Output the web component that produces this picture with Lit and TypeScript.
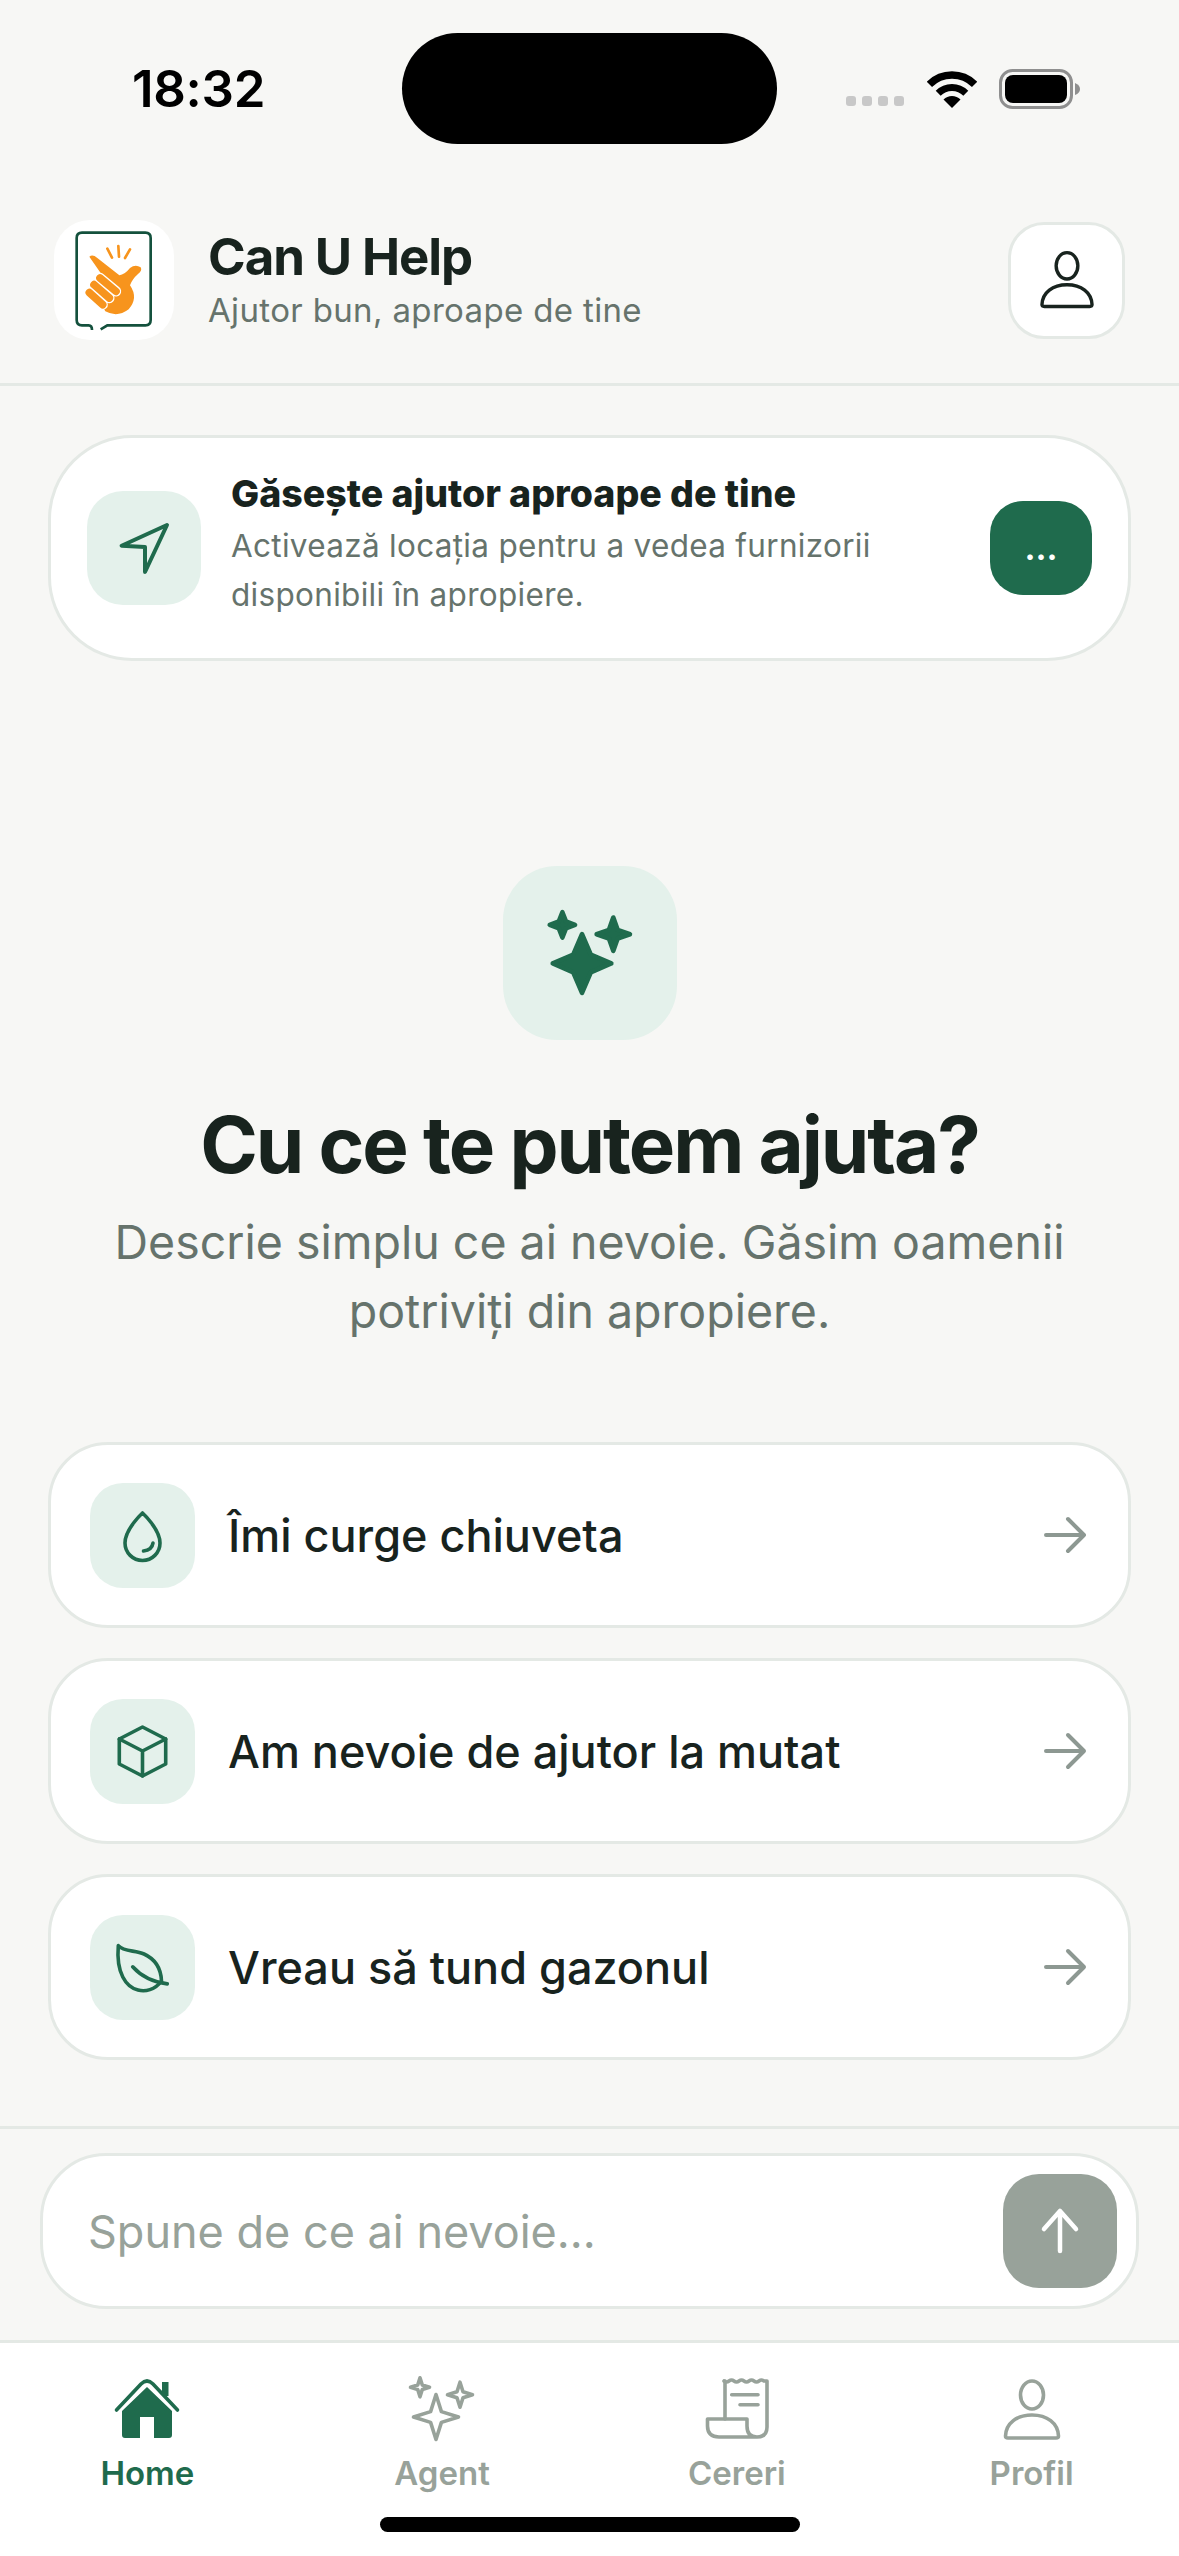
import { LitElement, html, css, svg } from "lit";
import { customElement } from "lit/decorators.js";

function star(cx: number, cy: number, r: number, k = 0.26) {
  const i = r * k;
  return `M${cx} ${cy - r}L${cx + i} ${cy - i}L${cx + r} ${cy}L${cx + i} ${cy + i}L${cx} ${cy + r}L${cx - i} ${cy + i}L${cx - r} ${cy}L${cx - i} ${cy - i}Z`;
}

const personIcon = svg`
  <ellipse cx="36" cy="21" rx="11.5" ry="14" fill="none" stroke="currentColor" stroke-width="3.6"/>
  <path d="M9.5 62C10 49 21 41 36 41C51 41 62 49 62.5 62Q62.5 64 60 64H12Q9.5 64 9.5 62Z" fill="none" stroke="currentColor" stroke-width="3.6" stroke-linejoin="round"/>`;

@customElement("app-root")
export class AppRoot extends LitElement {
  static styles = css`
    :host {
      display: flex;
      flex-direction: column;
      position: relative;
      width: 1179px;
      height: 2556px;
      background: #f7f7f5;
      font-family: Inter, "Liberation Sans", sans-serif;
      color: #18231e;
      overflow: hidden;
    }
    svg { display: block; }
    .status {
      height: 177px;
      flex: none;
      display: grid;
      grid-template-columns: 402px 375px 1fr;
      padding-top: 33px;
      box-sizing: border-box;
    }
    .time {
      height: 111px;
      display: flex;
      align-items: center;
      padding-left: 132px;
      font-size: 51px;
      font-weight: 600;
      color: #000;
      letter-spacing: -0.3px;
    }
    .island { width: 375px; height: 111px; border-radius: 56px; background: #000; }
    .sys { height: 111px; display: flex; align-items: center; padding-left: 69px; }
    .dots { display: flex; gap: 6px; align-self: flex-end; margin-bottom: 38px; }
    .dots i { width: 10px; height: 10px; border-radius: 3px; background: #c8c8c8; }
    .wifi { margin-left: 23px; }
    .battery { margin-left: 22px; }

    .header {
      flex: none;
      display: flex;
      align-items: center;
      height: 209px;
      box-sizing: border-box;
      padding: 0 54px 0 54px;
      border-bottom: 3px solid #e4e9e5;
    }
    .logo { width: 120px; height: 120px; border-radius: 36px; background: #fff; flex: none; overflow: hidden; }
    .brand { margin-left: 34px; flex: 1; margin-top: -5px; }
    .brand h2 { margin: 0; font-size: 51px; line-height: 62px; font-weight: 700; letter-spacing: -1.1px; }
    .brand p { margin: 2px 0 0; font-size: 33px; line-height: 40px; color: #66736c; letter-spacing: 0.35px; }
    .avatar {
      width: 117px; height: 117px; box-sizing: border-box; border-radius: 36px;
      background: #fff; border: 3px solid #e4e9e5;
      display: flex; align-items: center; justify-content: center; color: #18231e;
    }

    .loc {
      flex: none;
      margin: 49px 48px 0;
      height: 226px;
      box-sizing: border-box;
      background: #fff;
      border: 3px solid #e4e9e5;
      border-radius: 84px;
      display: flex;
      align-items: center;
      padding: 0 36px;
    }
    .loc-ico { width: 114px; height: 114px; border-radius: 36px; background: #e4f1eb; flex: none; }
    .loc-text { margin-left: 30px; flex: 1; margin-top: -7px; }
    .loc-text h3 { margin: 0; font-size: 37.5px; line-height: 48px; font-weight: 800; white-space: nowrap; }
    .loc-text p { margin: 3px 0 0; font-size: 31.5px; line-height: 49px; color: #66736c; letter-spacing: 0.3px; }
    .more {
      width: 102px; height: 94px; border-radius: 33px; background: #1f6b4d; color: #fff; flex: none;
      display: flex; align-items: center; justify-content: center; font-size: 33px; font-weight: 700; line-height: 1;
    }

    .hero { flex: none; margin-top: 205px; display: flex; flex-direction: column; align-items: center; }
    .spark { width: 174px; height: 174px; border-radius: 54px; background: #e4f1eb; }
    .hero h1 { margin: 57px 0 0; font-size: 78px; line-height: 96px; font-weight: 700; letter-spacing: -2.1px; }
    .hero p { margin: 15px 0 0; width: 1000px; text-align: center; font-size: 46.5px; line-height: 69px; color: #66736c; }

    .rows { flex: none; margin: 96px 48px 0; display: flex; flex-direction: column; gap: 30px; }
    .row {
      height: 186px; box-sizing: border-box; background: #fff; border: 3px solid #e4e9e5; border-radius: 60px;
      display: flex; align-items: center; padding: 0 39px;
    }
    .row-ico { width: 105px; height: 105px; border-radius: 33px; background: #e4f1eb; flex: none; }
    .row span { margin-left: 33px; flex: 1; font-size: 45px; font-weight: 500; }

    .composer {
      flex: none;
      margin-top: 66px;
      height: 214px;
      box-sizing: border-box;
      border-top: 3px solid #e4e9e5;
      padding: 24px 40px 0 40px;
    }
    .input {
      height: 156px; box-sizing: border-box; background: #fff; border: 3px solid #e4e9e5; border-radius: 66px;
      display: flex; align-items: center; padding: 0 19px 0 45px;
    }
    .input span { flex: 1; font-size: 45px; color: #98a29a; }
    .send { width: 114px; height: 114px; border-radius: 36px; background: #98a29a; display: flex; align-items: center; justify-content: center; }

    .nav {
      flex: 1;
      background: #fff;
      border-top: 3px solid #e4e9e5;
      display: grid;
      grid-template-columns: repeat(4, 1fr);
      padding-top: 31px;
      box-sizing: border-box;
    }
    .tab { display: flex; flex-direction: column; align-items: center; color: #98a29a; }
    .tab.on { color: #1f6b4d; }
    .tab b { font-size: 33px; font-weight: 600; line-height: 40px; margin-top: 7px; }
    .home-bar { position: absolute; left: 380px; bottom: 24px; width: 420px; height: 15px; border-radius: 8px; background: #000; }
  `;

  private arrow() {
    return html`<svg width="48" height="48" viewBox="0 0 48 48" fill="none" stroke="#8d9892" stroke-width="4" stroke-linecap="round" stroke-linejoin="round"><path d="M5 24H43M27 8L43 24L27 40"/></svg>`;
  }

  private row(label: string, icon: unknown) {
    return html`<div class="row">
      <div class="row-ico"><svg width="105" height="105" viewBox="0 0 105 105" fill="none" stroke="#1f6b4d" stroke-width="3.6" stroke-linecap="round" stroke-linejoin="round">${icon}</svg></div>
      <span>${label}</span>
      ${this.arrow()}
    </div>`;
  }

  render() {
    return html`
      <div class="status">
        <div class="time">18:32</div>
        <div class="island"></div>
        <div class="sys">
          <div class="dots"><i></i><i></i><i></i><i></i></div>
          <svg class="wifi" width="50" height="38" viewBox="0 0 50 38">
            <path d="M2.4 14.4A32 32 0 0 1 47.6 14.4" fill="none" stroke="#000" stroke-width="7.5"/>
            <path d="M11.2 23.2A19.5 19.5 0 0 1 38.8 23.2" fill="none" stroke="#000" stroke-width="7"/>
            <path d="M25 38L16.5 29.5A12 12 0 0 1 33.5 29.5Z" fill="#000"/>
          </svg>
          <svg class="battery" width="82" height="40" viewBox="0 0 82 40">
            <rect x="1.5" y="1.5" width="71" height="37" rx="12" fill="none" stroke="#8f8f8f" stroke-width="3"/>
            <rect x="6" y="6" width="62" height="28" rx="8" fill="#000"/>
            <path d="M76 14Q81 16 81 20Q81 24 76 26Z" fill="#8f8f8f"/>
          </svg>
        </div>
      </div>

      <div class="header">
        <div class="logo">
          <svg width="120" height="120" viewBox="72 62 360 360">
            <path d="M186 392Q186 378 176 378H156Q140 378 140 362V116Q140 100 156 100H346Q362 100 362 116V362Q362 378 346 378H232L212 390" fill="none" stroke="#14513d" stroke-width="8"/>
            <path d="M232 148L246 175M265 140L267 172M300 150L285 176" stroke="#f7941d" stroke-width="8" stroke-linecap="round"/>
            <path d="M178 172Q188 164 202 176L268 228Q284 226 300 206Q316 194 332 204Q338 214 324 224Q306 240 300 258Q326 296 296 330Q262 356 226 336L205 300L225 240Z" fill="#f7941d"/>
            <g fill="none" stroke-linecap="round">
              <path d="M210 236L258 276M192 256L238 296M178 280L218 316" stroke="#fff" stroke-width="31"/>
              <path d="M210 236L258 276M192 256L238 296M178 280L218 316" stroke="#f7941d" stroke-width="23"/>
            </g>
          </svg>
        </div>
        <div class="brand">
          <h2>Can U Help</h2>
          <p>Ajutor bun, aproape de tine</p>
        </div>
        <div class="avatar"><svg width="68" height="68" viewBox="0 0 72 72">${personIcon}</svg></div>
      </div>

      <div class="loc">
        <div class="loc-ico">
          <svg width="114" height="114" viewBox="0 0 114 114" fill="none" stroke="#1f6b4d" stroke-width="4" stroke-linecap="round" stroke-linejoin="round"><path d="M80 34L34.6 54.7L58 56L58 81Z"/></svg>
        </div>
        <div class="loc-text">
          <h3>Găsește ajutor aproape de tine</h3>
          <p>Activează locația pentru a vedea furnizorii<br />disponibili în apropiere.</p>
        </div>
        <div class="more">...</div>
      </div>

      <div class="hero">
        <div class="spark">
          <svg width="174" height="174" viewBox="70 47 520 523" fill="#1f6b4d" stroke="#1f6b4d" stroke-width="14" stroke-linejoin="round">
            <path d="${star(306, 340, 88, 0.3)}"/>
            <path d="${star(247, 224, 38, 0.28)}"/>
            <path d="${star(400, 252, 50, 0.26)}"/>
          </svg>
        </div>
        <h1>Cu ce te putem ajuta?</h1>
        <p>Descrie simplu ce ai nevoie. Găsim oamenii<br />potriviți din apropiere.</p>
      </div>

      <div class="rows">
        ${this.row("Îmi curge chiuveta", svg`
          <path d="M52.5 30C52.5 30 35 46 35 60A17.5 17.5 0 0 0 70 60C70 46 52.5 30 52.5 30Z"/>
          <path d="M53.5 68Q62 67 63 60"/>`)}
        ${this.row("Am nevoie de ajutor la mutat", svg`
          <path d="M52.5 28L75.7 40V65L52.5 77L29.3 65V40Z"/>
          <path d="M29.3 40L52.5 52L75.7 40M52.5 52V77"/>`)}
        ${this.row("Vreau să tund gazonul", svg`
          <path d="M28.3 30.6C34 37 45 35 54 39C65 44 71 54 71.5 66C65 75 55 77 48 75C36 72 26 58 28.3 30.6Z"/>
          <path d="M42.7 51.8C50 60 62 67 77.3 68.9"/>`)}
      </div>

      <div class="composer">
        <div class="input">
          <span>Spune de ce ai nevoie...</span>
          <div class="send">
            <svg width="48" height="48" viewBox="0 0 48 48" fill="none" stroke="#fff" stroke-width="4.5" stroke-linecap="round" stroke-linejoin="round"><path d="M24 44V4M8 22L24 4L40 22"/></svg>
          </div>
        </div>
      </div>

      <div class="nav">
        <div class="tab on">
          <svg width="72" height="72" viewBox="0 0 72 72">
            <path d="M11 37L36 13L61 37V61Q61 64 58 64H43V43H29V64H14Q11 64 11 61Z" fill="currentColor"/>
            <path d="M5.5 36L30 10Q36 4 42 10L66.5 36" fill="none" stroke="currentColor" stroke-width="3.6" stroke-linecap="round"/>
            <rect x="51" y="8" width="6.5" height="14" fill="currentColor"/>
          </svg>
          <b>Home</b>
        </div>
        <div class="tab">
          <svg width="72" height="72" viewBox="0 0 72 72" fill="none" stroke="currentColor" stroke-width="3.6" stroke-linejoin="round">
            <path d="${star(30, 43, 22.5, 0.24)}"/>
            <path d="${star(14, 13.3, 9.5, 0.24)}"/>
            <path d="${star(54, 20.7, 12.5, 0.24)}"/>
          </svg>
          <b>Agent</b>
        </div>
        <div class="tab">
          <svg width="72" height="72" viewBox="0 0 72 72" fill="none" stroke="currentColor" stroke-width="3.6" stroke-linecap="round" stroke-linejoin="round">
            <path d="M23 7Q25.5 9 28 7T33 7T38 7T43 7T48 7T53 7T58 7T63 7L66 7V53Q66 63 56 63H18Q6.5 63 6.5 52V45H46V52Q46 63 56 63"/>
            <path d="M24 7V45M30.7 20.7H57M39 30.7H57"/>
          </svg>
          <b>Cereri</b>
        </div>
        <div class="tab">
          <svg width="72" height="72" viewBox="0 0 72 72">${personIcon}</svg>
          <b>Profil</b>
        </div>
      </div>
      <div class="home-bar"></div>
    `;
  }
}
